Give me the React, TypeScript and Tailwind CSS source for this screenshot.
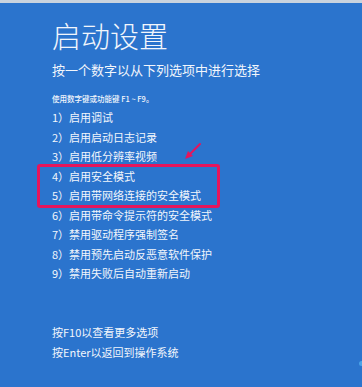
const items = [
  "1）启用调试",
  "2）启用启动日志记录",
  "3）启用低分辨率视频",
  "4）启用安全模式",
  "5）启用带网络连接的安全模式",
  "6）启用带命令提示符的安全模式",
  "7）禁用驱动程序强制签名",
  "8）禁用预先启动反恶意软件保护",
  "9）禁用失败后自动重新启动",
];

const font = { fontFamily: '"Noto Sans CJK SC", "Noto Sans", sans-serif' };

export default function App() {
  return (
    <div
      className="relative w-[362px] h-[387px] overflow-hidden bg-[#2b74cd] text-[#f2f6fc]"
      style={font}
    >
      <div className="h-[3px] bg-[#c9d3de]" />
      <div className="flex flex-col pl-[52px] pt-[15px]">
        <h1 className="text-[29px] leading-[34px] font-light">启动设置</h1>
        <p className="mt-[9px] text-[13px] leading-[18px]">按一个数字以从下列选项中进行选择</p>
        <p className="mt-[15px] text-[7.5px] leading-[10px] font-medium">使用数字键或功能键 F1 ~ F9。</p>
        <ul className="mt-[4px] flex flex-col">
          {items.map((t) => (
            <li key={t} className="text-[11px] leading-[19.5px]">
              {t}
            </li>
          ))}
        </ul>
        <div className="mt-[38px] flex flex-col text-[11px] leading-[20px]">
          <p>按F10以查看更多选项</p>
          <p>按Enter以返回到操作系统</p>
        </div>
      </div>

      {/* highlight box over items 4 and 5 */}
      <div className="absolute left-[37px] top-[164px] w-[183px] h-[44px] border-[3px] border-[#e6155c] rounded-[3px]" />

      {/* arrow */}
      <svg className="absolute left-[180px] top-[140px]" width="26" height="24" viewBox="0 0 26 24">
        <path d="M20 4 L10 14" stroke="#e6155c" strokeWidth="2" strokeLinecap="round" />
        <path d="M5 19 L8 11 L13 16 Z" fill="#e6155c" />
      </svg>

      <div className="absolute right-0 top-[361px] w-[3px] h-[5px] rounded-l-full bg-[#4aa3e8]" />
    </div>
  );
}
